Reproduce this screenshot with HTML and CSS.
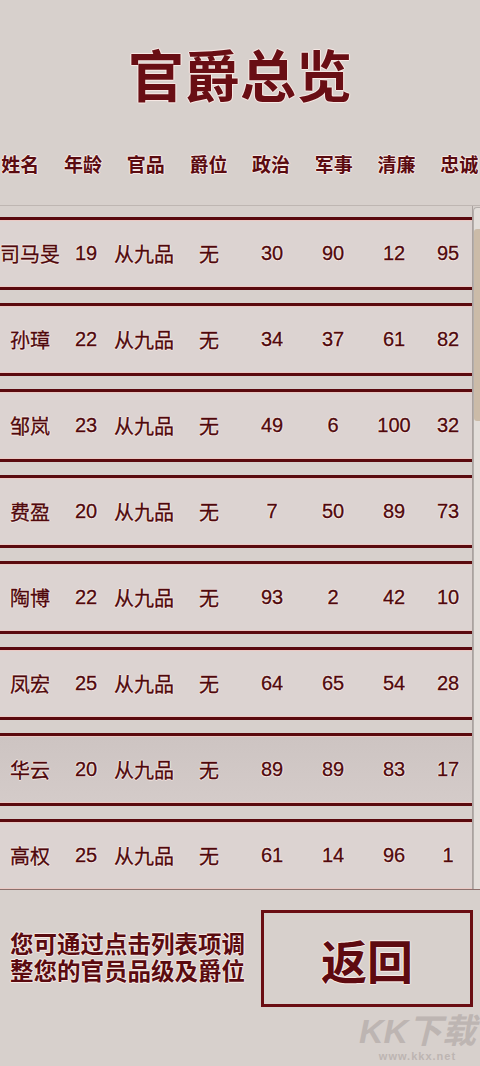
FILE: index.html
```html
<!DOCTYPE html>
<html lang="zh">
<head>
<meta charset="utf-8">
<title>官爵总览</title>
<link rel="stylesheet" href="styles.css">
</head>
<body>
<h1 class="title">官爵总览</h1>
<div class="head">
  <span>姓名</span><span>年龄</span><span>官品</span><span>爵位</span><span>政治</span><span>军事</span><span>清廉</span><span>忠诚</span>
</div>
<div class="list">
  <div class="viewport">
    <div class="row"><span>司马旻</span><span>19</span><span>从九品</span><span>无</span><span>30</span><span>90</span><span>12</span><span>95</span></div>
    <div class="row"><span>孙璋</span><span>22</span><span>从九品</span><span>无</span><span>34</span><span>37</span><span>61</span><span>82</span></div>
    <div class="row"><span>邹岚</span><span>23</span><span>从九品</span><span>无</span><span>49</span><span>6</span><span>100</span><span>32</span></div>
    <div class="row"><span>费盈</span><span>20</span><span>从九品</span><span>无</span><span>7</span><span>50</span><span>89</span><span>73</span></div>
    <div class="row"><span>陶博</span><span>22</span><span>从九品</span><span>无</span><span>93</span><span>2</span><span>42</span><span>10</span></div>
    <div class="row"><span>凤宏</span><span>25</span><span>从九品</span><span>无</span><span>64</span><span>65</span><span>54</span><span>28</span></div>
    <div class="row active"><span>华云</span><span>20</span><span>从九品</span><span>无</span><span>89</span><span>89</span><span>83</span><span>17</span></div>
    <div class="row"><span>高权</span><span>25</span><span>从九品</span><span>无</span><span>61</span><span>14</span><span>96</span><span>1</span></div>
  </div>
  <div class="scrollbar"><div class="thumb"></div></div>
</div>
<div class="footer">
  <p class="hint">您可通过点击列表项调<br>整您的官员品级及爵位</p>
  <div class="back">返回</div>
</div>
<div class="watermark"><span class="wm-big">KK下载</span><span class="wm-small">www.kkx.net</span></div>
</body>
</html>
```

FILE: styles.css
```css
html, body {
  margin: 0;
  padding: 0;
}
body {
  width: 480px;
  height: 1066px;
  overflow: hidden;
  position: relative;
  background: #d7d0cc;
  color: #4f080c;
  font-family: "Liberation Sans", "Noto Sans CJK SC", sans-serif;
  text-shadow: 1px 0 0 #f6e8e4, -1px 0 0 #f6e8e4, 0 1px 0 #f6e8e4, 0 -1px 0 #f6e8e4, 0 0 2px #f6e8e4;
}
.title {
  margin: 50px 0 0;
  font-size: 56px;
  line-height: 56px;
  font-weight: 700;
  text-align: center;
  color: #690e14;
}
.head {
  display: grid;
  grid-template-columns: repeat(8, 62.7px);
  margin: 48px 0 0 -11px;
  font-size: 19px;
  line-height: 24px;
  font-weight: 700;
  text-align: center;
  white-space: nowrap;
  color: #5a0b10;
}
.list {
  display: flex;
  margin-top: 27px;
  height: 685px;
  box-sizing: border-box;
  border-top: 1px solid #beb6b2;
  border-bottom: 1px solid #8c706d;
}
.viewport {
  width: 472px;
  flex: none;
  overflow: hidden;
  padding-top: 11px;
  border-right: 1px solid #aaa29f;
}
.row {
  display: grid;
  grid-template-columns: 60px 52px 64px 66px 60px 62px 60px 48px;
  align-items: center;
  height: 73px;
  box-sizing: border-box;
  margin-bottom: 13px;
  border-top: 3px solid #5a0a0e;
  border-bottom: 3px solid #5a0a0e;
  background: #dcd3d1;
  box-shadow: inset 0 1px 0 #ebc9c4, inset 0 -1px 0 #ebc9c4;
  text-align: center;
  font-size: 20px;
  white-space: nowrap;
  -webkit-text-stroke: 0.3px #4f080c;
}
.row.active {
  background: linear-gradient(#cdc4c2, #d4cbc9);
}
.scrollbar {
  width: 7px;
  flex: none;
  box-sizing: border-box;
  margin-top: 1px;
  padding-top: 21px;
  background: #e3deda;
  border: 1px solid #b4aeab;
  border-right: 0;
  border-bottom: 0;
  border-radius: 4px 0 0 0;
}
.thumb {
  height: 192px;
  background: #cbbba8;
  border-radius: 3px 0 0 3px;
}
.footer {
  display: flex;
  align-items: center;
  margin-top: 20px;
  padding-left: 10px;
}
.hint {
  margin: 0;
  font-size: 23.5px;
  line-height: 27px;
  font-weight: 700;
  white-space: nowrap;
  color: #5a0b10;
}
.back {
  margin-left: auto;
  margin-right: 7px;
  width: 212px;
  height: 97px;
  box-sizing: border-box;
  border: 3px solid #6a0d13;
  display: flex;
  align-items: center;
  justify-content: center;
  font-size: 46px;
  font-weight: 700;
  color: #5e0a10;
}
.watermark {
  position: absolute;
  right: 4px;
  bottom: 4px;
  display: flex;
  flex-direction: column;
  align-items: center;
  color: #bdb5b2;
  text-shadow: none;
}
.wm-big {
  font-size: 34px;
  line-height: 38px;
  font-weight: 700;
  font-style: italic;
}
.wm-small {
  font-size: 11px;
  line-height: 12px;
  font-weight: 700;
  letter-spacing: 1px;
}
```
